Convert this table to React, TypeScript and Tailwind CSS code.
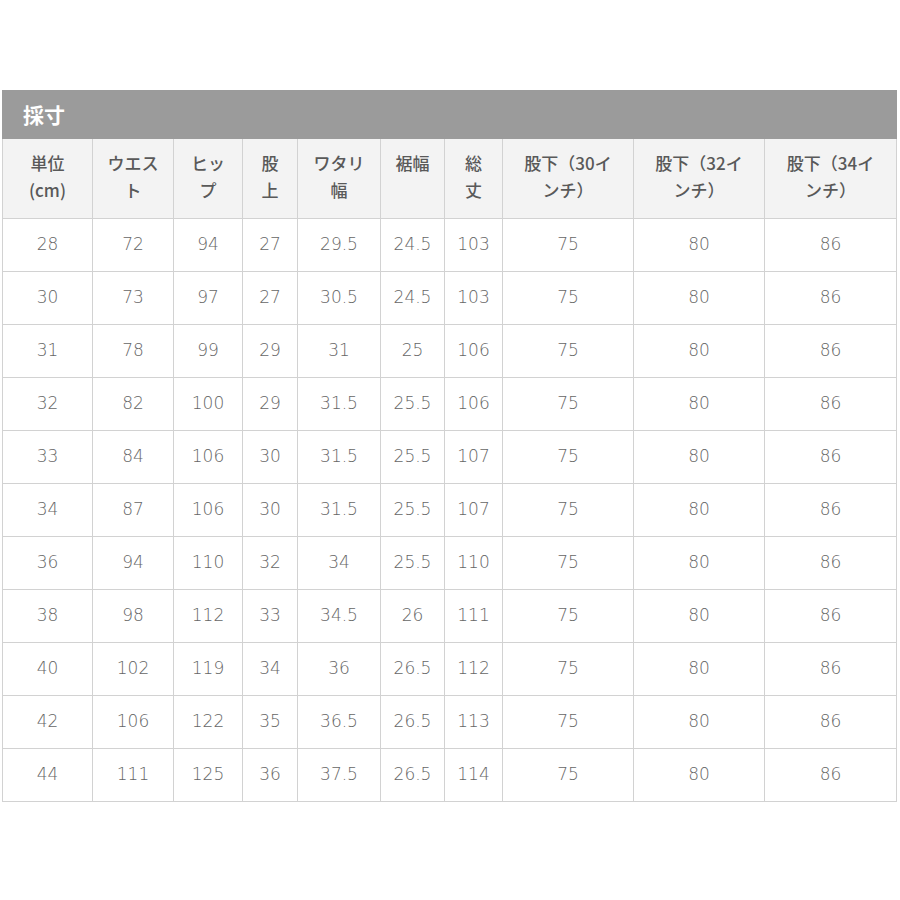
const headers = [
  "単位(cm)",
  "ウエスト",
  "ヒップ",
  "股上",
  "ワタリ幅",
  "裾幅",
  "総丈",
  "股下（30インチ）",
  "股下（32インチ）",
  "股下（34インチ）",
];

const widths = [90, 81, 69, 55, 83, 64, 58, 131, 131, 132];

const rows = [
  ["28", "72", "94", "27", "29.5", "24.5", "103", "75", "80", "86"],
  ["30", "73", "97", "27", "30.5", "24.5", "103", "75", "80", "86"],
  ["31", "78", "99", "29", "31", "25", "106", "75", "80", "86"],
  ["32", "82", "100", "29", "31.5", "25.5", "106", "75", "80", "86"],
  ["33", "84", "106", "30", "31.5", "25.5", "107", "75", "80", "86"],
  ["34", "87", "106", "30", "31.5", "25.5", "107", "75", "80", "86"],
  ["36", "94", "110", "32", "34", "25.5", "110", "75", "80", "86"],
  ["38", "98", "112", "33", "34.5", "26", "111", "75", "80", "86"],
  ["40", "102", "119", "34", "36", "26.5", "112", "75", "80", "86"],
  ["42", "106", "122", "35", "36.5", "26.5", "113", "75", "80", "86"],
  ["44", "111", "125", "36", "37.5", "26.5", "114", "75", "80", "86"],
];

export default function App() {
  return (
    <div className="w-[900px] h-[900px] bg-white pt-[90px] pl-[2px] font-['Noto_Sans_CJK_JP',sans-serif] text-[#595959]">
      <div className="w-[895px]">
        <div className="h-[49px] bg-[#9b9b9b] flex items-center pl-[21px] text-white text-[21px] font-bold">
          採寸
        </div>
        <table className="table-fixed border-collapse w-[895px]">
          <colgroup>
            {widths.map((w, i) => (
              <col key={i} style={{ width: w }} />
            ))}
          </colgroup>
          <thead>
            <tr className="h-[79px]">
              {headers.map((h, i) => (
                <th
                  key={i}
                  className="border border-[#d2d2d2] border-t-0 bg-[#f3f3f3] align-top pt-[10px] px-[14px] text-[17px] leading-[27px] font-medium text-[#595959]"
                >
                  {h}
                </th>
              ))}
            </tr>
          </thead>
          <tbody>
            {rows.map((r, ri) => (
              <tr key={ri} className="h-[53px]">
                {r.map((c, ci) => (
                  <td
                    key={ci}
                    className="border border-[#d2d2d2] text-center align-middle text-[17px] font-['DejaVu_Sans',sans-serif] font-light text-[#666]"
                  >
                    {c}
                  </td>
                ))}
              </tr>
            ))}
          </tbody>
        </table>
      </div>
    </div>
  );
}
